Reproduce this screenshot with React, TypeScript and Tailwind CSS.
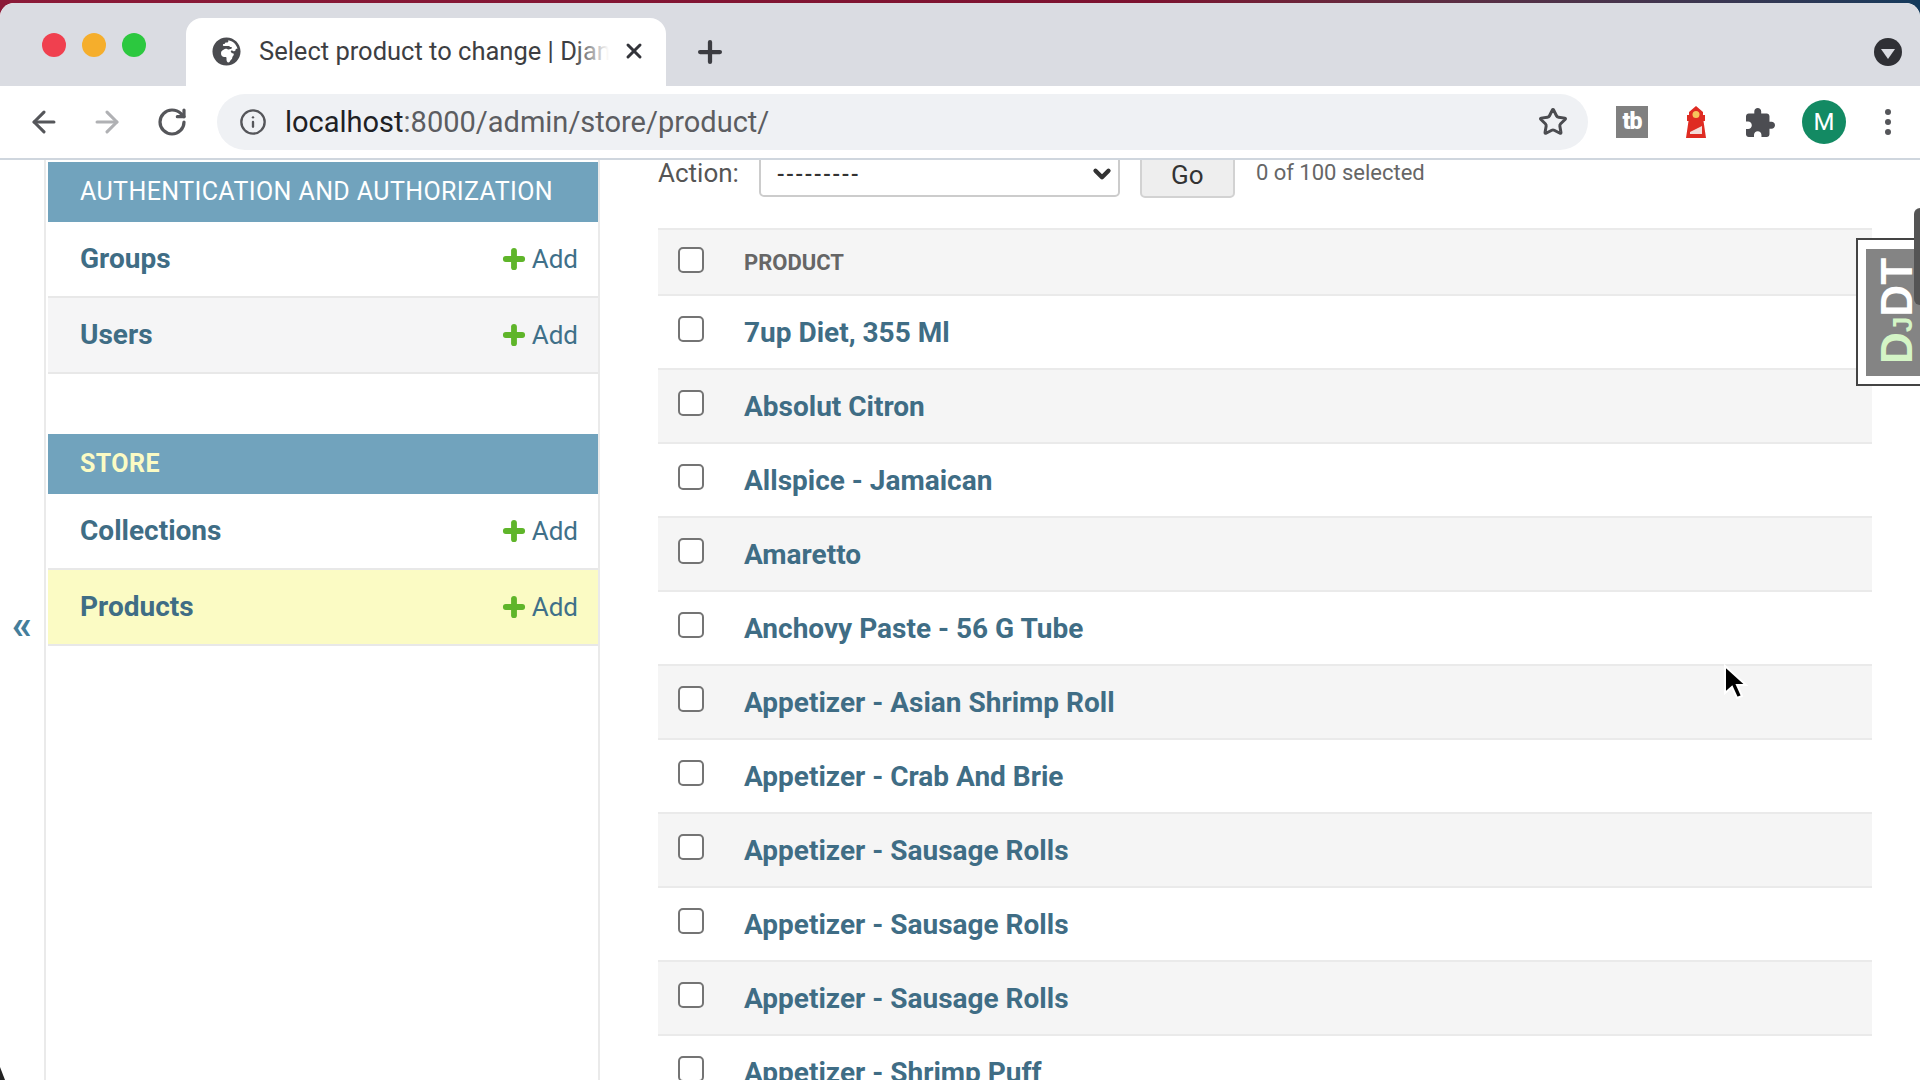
import { Plus, X, ArrowLeft, ArrowRight, RotateCw, Info, Star, ChevronDown } from "lucide-react";
import { FaGlobeAfrica } from "react-icons/fa";

const products = [
  "7up Diet, 355 Ml",
  "Absolut Citron",
  "Allspice - Jamaican",
  "Amaretto",
  "Anchovy Paste - 56 G Tube",
  "Appetizer - Asian Shrimp Roll",
  "Appetizer - Crab And Brie",
  "Appetizer - Sausage Rolls",
  "Appetizer - Sausage Rolls",
  "Appetizer - Sausage Rolls",
  "Appetizer - Shrimp Puff",
];

const Checkbox = () => (
  <span className="block w-[26px] h-[26px] rounded-[5px] border-2 border-[#747474] bg-white shrink-0" />
);

const SideRow = ({ name, className }: { name: string; className: string }) => (
  <div className={`flex items-center justify-between h-[76px] pl-8 pr-[20px] border-b-2 border-[#e8e8e8] ${className}`}>
    <span className="text-[28px] font-bold text-[#3f6d85]">{name}</span>
    <span className="flex items-center gap-[4px] text-[26px] text-[#3f7089]">
      <Plus size={28} strokeWidth={5} className="text-[#5fb52a]" />
      Add
    </span>
  </div>
);

const Sidebar = () => (
  <aside className="flex shrink-0 w-[600px] h-full">
    <div className="w-[46px] shrink-0 flex flex-col items-center pt-[446px] border-r-2 border-[#eaeaea] text-[#447e9b] text-[40px] font-bold leading-none">
      «
    </div>
    <div className="flex-1 pt-[2px] border-r-2 border-[#eaeaea] pl-[2px]">
      <div className="flex items-center h-[60px] pl-8 bg-[#71a3bd] text-white text-[25px] tracking-[0.4px]">
        AUTHENTICATION AND AUTHORIZATION
      </div>
      <SideRow name="Groups" className="bg-white" />
      <SideRow name="Users" className="bg-[#f5f5f6]" />
      <div className="h-[60px]" />
      <div className="flex items-center h-[60px] pl-8 bg-[#71a3bd] text-[#fbfbc4] text-[25px] font-bold tracking-[0.4px]">
        STORE
      </div>
      <SideRow name="Collections" className="bg-white" />
      <SideRow name="Products" className="bg-[#fbfbc4]" />
    </div>
  </aside>
);

const Chrome = () => (
  <header className="relative z-10 shrink-0">
    <div className="h-[83px] bg-[#dadce2] flex rounded-t-[14px]">
      <div className="w-[186px] flex items-center gap-[16px] pl-[42px]">
        <span className="w-[24px] h-[24px] rounded-full bg-[#f0404f]" />
        <span className="w-[24px] h-[24px] rounded-full bg-[#f5ae2c]" />
        <span className="w-[24px] h-[24px] rounded-full bg-[#2cc83f]" />
      </div>
      <div className="mt-[15px] w-[480px] h-[68px] bg-white rounded-t-[16px] flex items-center pl-[26px] pr-[20px] pb-[2px]">
        <FaGlobeAfrica size={29} className="text-[#4b4c50] shrink-0" />
        <span className="relative ml-[18px] w-[350px] overflow-hidden whitespace-nowrap text-[25.5px] text-[#3d3e42]">
          Select product to change | Djan
          <span className="absolute right-0 top-0 bottom-0 w-[36px] bg-linear-to-r from-transparent to-white" />
        </span>
        <X size={24} strokeWidth={3} className="ml-auto text-[#33343a]" />
      </div>
      <div className="ml-[27px] flex items-center pt-[15px]">
        <Plus size={34} strokeWidth={3} className="text-[#3c3d42]" />
      </div>
      <div className="ml-auto mr-[18px] flex items-center pt-[15px]">
        <span className="w-[28px] h-[28px] rounded-full bg-[#2f3035] flex items-center justify-center">
          <span className="w-0 h-0 mt-[3px] border-x-[7px] border-x-transparent border-t-[10px] border-t-[#dadce2]" />
        </span>
      </div>
    </div>
    <div className="h-[74px] bg-white border-b-2 border-[#cfd6de] flex items-center">
      <ArrowLeft size={34} strokeWidth={2.2} className="ml-[27px] text-[#55565a]" />
      <ArrowRight size={34} strokeWidth={2.2} className="ml-[29px] text-[#b0b1b4]" />
      <RotateCw size={32} strokeWidth={2.4} className="ml-[32px] text-[#55565a]" />
      <div className="ml-[29px] w-[1371px] h-[56px] rounded-full bg-[#eff1f4] flex items-center pl-[22px] pr-[20px]">
        <Info size={28} strokeWidth={2} className="text-[#55565a]" />
        <span className="ml-[18px] mt-[2px] text-[29px] text-[#5c5d61]">
          <span className="text-[#202124]">localhost</span>:8000/admin/store/product/
        </span>
        <Star size={30} strokeWidth={2.4} className="ml-auto text-[#4b4c50]" />
      </div>
      <span className="ml-[28px] w-[32px] h-[32px] bg-[#808080] flex items-center justify-center text-white font-black text-[23px] tracking-[-1px]">
        tb
      </span>
      <svg className="ml-[37px]" width="22" height="32" viewBox="0 0 22 32">
        <path d="M11 0l7 6v3h2v6h-1.500L21 32H1l2.500-17H2V9h2V6z" fill="#df2b22" />
        <circle cx="11" cy="8.500" r="3.500" fill="#f6c45c" />
        <path d="M5 26l12-6v8H5z" fill="#f3dcd8" />
      </svg>
      <svg className="ml-[39px] text-[#4c4d52]" width="29" height="29" viewBox="2 1 21 21" fill="currentColor">
        <path d="M20.5 11H19V7c0-1.100-.9-2-2-2h-4V3.500C13 2.120 11.880 1 10.500 1S8 2.120 8 3.500V5H4c-1.100 0-1.990.9-1.990 2v3.800H3.500c1.490 0 2.700 1.210 2.700 2.700s-1.210 2.700-2.700 2.700H2V20c0 1.100.9 2 2 2h3.800v-1.500c0-1.490 1.210-2.700 2.700-2.700 1.490 0 2.700 1.210 2.700 2.700V22H17c1.100 0 2-.9 2-2v-4h1.500c1.380 0 2.500-1.120 2.500-2.500S21.880 11 20.500 11z" />
      </svg>
      <span className="ml-[27px] w-[44px] h-[44px] rounded-full bg-[#138a63] flex items-center justify-center text-white text-[24px]">
        M
      </span>
      <span className="ml-[39px] flex flex-col gap-[4px]">
        <span className="w-[6px] h-[6px] rounded-full bg-[#55565a]" />
        <span className="w-[6px] h-[6px] rounded-full bg-[#55565a]" />
        <span className="w-[6px] h-[6px] rounded-full bg-[#55565a]" />
      </span>
    </div>
  </header>
);

const Main = () => (
  <main className="flex-1 pl-[58px] pr-[48px] min-w-0">
    <div className="h-[68px] flex items-start text-[#555]">
      <span className="text-[26px] leading-[26px]">Action:</span>
      <div className="ml-[20px] mt-[-9px] w-[361px] h-[46px] rounded-[5px] border-2 border-[#cccccc] bg-white flex items-center justify-between pl-[16px] pr-[3px] text-[22px] font-medium tracking-[1.8px] text-[#333]">
        ---------
        <ChevronDown size={26} strokeWidth={4} className="text-[#333]" />
      </div>
      <div className="ml-[20px] mt-[-9px] pt-[2px] w-[95px] h-[47px] rounded-[5px] border-2 border-[#d2d2d2] bg-[#eeeeee] flex items-center justify-center text-[26px] text-[#333]">
        Go
      </div>
      <span className="ml-[21px] text-[22px] leading-[26px] text-[#666]">0 of 100 selected</span>
    </div>
    <div className="h-[68px] bg-[#f5f5f5] border-y-2 border-[#eaeaea] flex items-center pl-[20px]">
      <span className="-mt-[5px]"><Checkbox /></span>
      <span className="ml-[40px] text-[22px] font-bold text-[#666]">PRODUCT</span>
    </div>
    {products.map((name, i) => (
      <div
        key={i}
        className={`h-[74px] flex items-center pl-[20px] border-b-2 border-[#eaeaea] ${i % 2 ? "bg-[#f5f5f5]" : "bg-white"}`}
      >
        <span className="-mt-[6px]"><Checkbox /></span>
        <span className="ml-[40px] mt-[2px] text-[28px] font-bold text-[#3f6d85]">{name}</span>
      </div>
    ))}
  </main>
);

export default function App() {
  return (
    <div
      className="relative w-[1920px] h-[1080px] overflow-hidden bg-linear-to-r from-[#8b1a38] via-[#7c1230] via-60% to-[#123a5c] flex flex-col"
      style={{ fontFamily: "Roboto, 'Liberation Sans', sans-serif" }}
    >
      <div className="mt-[3px] flex-1 flex flex-col min-h-0 bg-white rounded-t-[14px] overflow-hidden">
        <Chrome />
        <div className="flex flex-1 min-h-0 bg-white">
          <Sidebar />
          <Main />
        </div>
      </div>
      {/* debug toolbar handle */}
      <div className="absolute left-[1856px] top-[238px] w-[70px] h-[148px] border-2 border-[#444] bg-white pl-[8px] pt-[9px]">
        <div className="relative w-full h-[127px] bg-[#848484] flex items-center justify-center">
          <span
            className="-rotate-90 translate-x-[2px] -translate-y-[2px] whitespace-nowrap text-[44px] leading-none font-bold text-white"
            style={{ fontFamily: "'Liberation Sans', sans-serif" }}
          >
            <span className="text-[#d4f5c6]">D<span className="text-[28px]">J</span></span>DT
          </span>
        </div>
      </div>
      <div className="absolute left-[1914px] top-[208px] w-[6px] h-[97px] rounded-l-[6px] bg-[#555]" />
      <svg className="absolute left-[1722px] top-[664px]" width="26" height="36" viewBox="0 0 26 36">
        <path d="M3 2v27l7-6 5 11 5-2-5-11h9z" fill="#000" stroke="#fff" strokeWidth="2" />
      </svg>
      <svg className="absolute left-0 bottom-0" width="5" height="13" viewBox="0 0 5 13">
        <path d="M0 0l5 13H0z" fill="#222" />
      </svg>
    </div>
  );
}
